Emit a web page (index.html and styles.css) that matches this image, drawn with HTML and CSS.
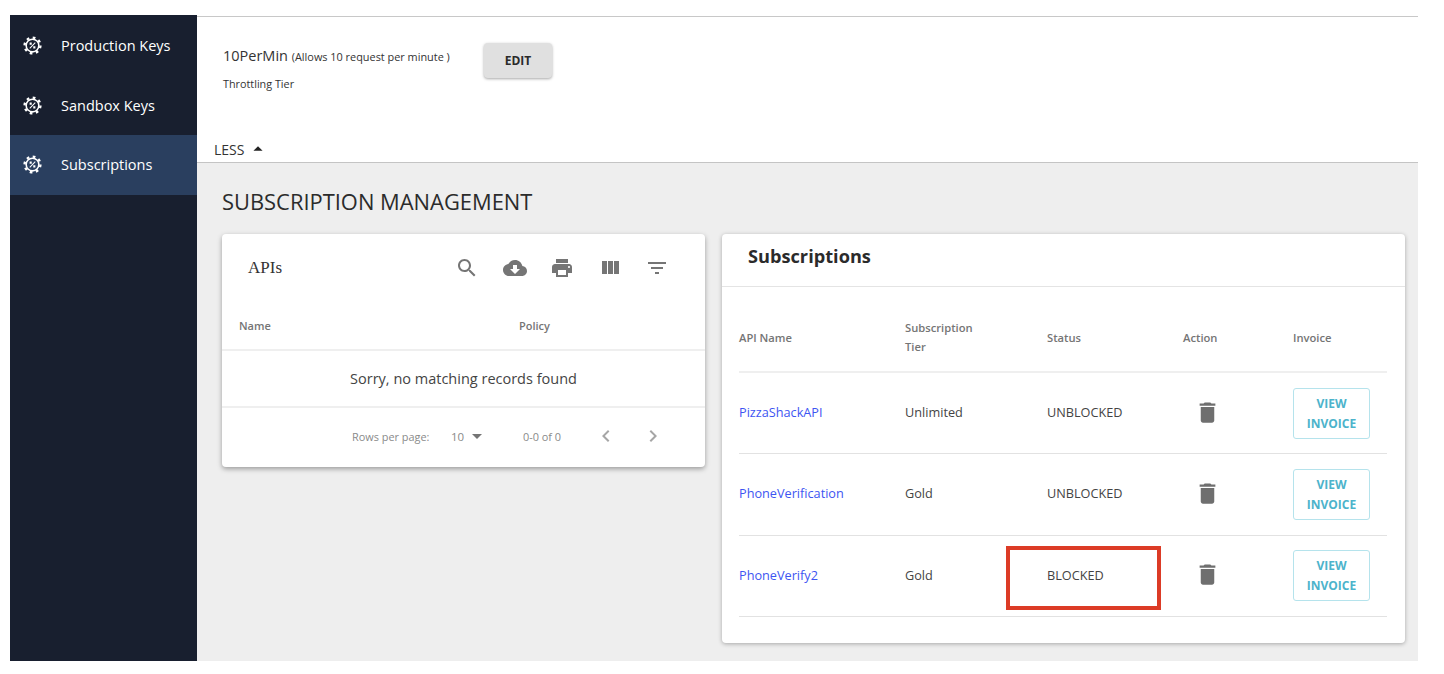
FILE: index.html
```html
<!DOCTYPE html>
<html lang="en">
<head>
    <meta charset="UTF-8">
    <meta name="viewport" content="width=device-width, initial-scale=1.0">
    <title>Subscriptions</title>
    <link rel="stylesheet" href="styles.css">
</head>
<body>
    <svg class="icon-defs" aria-hidden="true">
        <symbol id="gear" viewBox="0 0 24 24">
            <circle cx="12" cy="12" r="8" fill="none" stroke="currentColor" stroke-width="2"/>
            <circle cx="12" cy="12" r="10" fill="none" stroke="currentColor" stroke-width="3" stroke-dasharray="3.4 4.45"/>
            <path d="M8.5 15.5l7-7M9 9h1.4v1.4H9zM13.6 13.6H15V15h-1.4z" fill="none" stroke="currentColor" stroke-width="1.3"/>
        </symbol>
        <symbol id="trash" viewBox="0 0 24 24">
            <path d="M6 19c0 1.1.9 2 2 2h8c1.1 0 2-.9 2-2V7H6v12zM19 4h-3.5l-1-1h-5l-1 1H5v2h14V4z"/>
        </symbol>
    </svg>

    <div class="app">
        <nav class="sidebar">
            <a class="nav-item"><svg class="nav-icon"><use href="#gear"/></svg>Production Keys</a>
            <a class="nav-item"><svg class="nav-icon"><use href="#gear"/></svg>Sandbox Keys</a>
            <a class="nav-item active"><svg class="nav-icon"><use href="#gear"/></svg>Subscriptions</a>
        </nav>

        <main class="main">
            <section class="tier-panel">
                <div class="tier-row">
                    <div class="tier-info">
                        <p class="tier-name">10PerMin <small>(Allows 10 request per minute )</small></p>
                        <p class="tier-label">Throttling Tier</p>
                    </div>
                    <button class="edit-btn">EDIT</button>
                </div>
                <div class="less">LESS <svg viewBox="0 0 24 24"><path d="M7 14l5-5 5 5z"/></svg></div>
            </section>

            <section class="manage">
                <h1>SUBSCRIPTION MANAGEMENT</h1>
                <div class="cards">
                    <div class="card apis-card">
                        <div class="apis-toolbar">
                            <span class="apis-title">APIs</span>
                            <div class="toolbar-icons">
                                <svg viewBox="0 0 24 24"><path d="M15.5 14h-.79l-.28-.27C15.41 12.59 16 11.11 16 9.5 16 5.91 13.09 3 9.5 3S3 5.91 3 9.5 5.91 16 9.5 16c1.61 0 3.09-.59 4.23-1.57l.27.28v.79l5 4.99L20.49 19l-4.99-5zm-6 0C7.01 14 5 11.99 5 9.5S7.01 5 9.5 5 14 7.01 14 9.5 11.99 14 9.5 14z"/></svg>
                                <svg viewBox="0 0 24 24"><path d="M19.35 10.04C18.67 6.59 15.64 4 12 4 9.11 4 6.6 5.64 5.35 8.04 2.34 8.36 0 10.91 0 14c0 3.31 2.69 6 6 6h13c2.76 0 5-2.24 5-5 0-2.64-2.05-4.78-4.65-4.96zM17 13l-5 5-5-5h3V9h4v4h3z"/></svg>
                                <svg viewBox="0 0 24 24"><path d="M19 8H5c-1.66 0-3 1.34-3 3v6h4v4h12v-4h4v-6c0-1.66-1.34-3-3-3zm-3 11H8v-5h8v5zm3-7c-.55 0-1-.45-1-1s.45-1 1-1 1 .45 1 1-.45 1-1 1zm-1-9H6v4h12V3z"/></svg>
                                <svg viewBox="0 0 24 24"><path d="M10 18h5V5h-5v13zm-6 0h5V5H4v13zM16 5v13h5V5h-5z"/></svg>
                                <svg viewBox="0 0 24 24"><path d="M10 18h4v-2h-4v2zM3 6v2h18V6H3zm3 7h12v-2H6v2z"/></svg>
                            </div>
                        </div>
                        <div class="apis-head">
                            <span>Name</span>
                            <span>Policy</span>
                        </div>
                        <div class="apis-empty">Sorry, no matching records found</div>
                        <div class="apis-footer">
                            <span class="rows-label">Rows per page:</span>
                            <span class="rows-value">10 <svg viewBox="0 0 24 24"><path d="M7 10l5 5 5-5z"/></svg></span>
                            <span class="rows-range">0-0 of 0</span>
                            <svg class="pager" viewBox="0 0 24 24"><path d="M15.41 7.41L14 6l-6 6 6 6 1.41-1.41L10.83 12z"/></svg>
                            <svg class="pager" viewBox="0 0 24 24"><path d="M10 6L8.59 7.41 13.17 12l-4.58 4.58L10 18l6-6z"/></svg>
                        </div>
                    </div>

                    <div class="card subs-card">
                        <h2>Subscriptions</h2>
                        <div class="subs-table">
                            <div class="subs-row subs-head">
                                <span>API Name</span>
                                <span>Subscription<br>Tier</span>
                                <span>Status</span>
                                <span>Action</span>
                                <span>Invoice</span>
                            </div>
                            <div class="subs-row">
                                <a class="api-link">PizzaShackAPI</a>
                                <span>Unlimited</span>
                                <span>UNBLOCKED</span>
                                <svg class="trash"><use href="#trash"/></svg>
                                <button class="invoice-btn">VIEW INVOICE</button>
                            </div>
                            <div class="subs-row">
                                <a class="api-link">PhoneVerification</a>
                                <span>Gold</span>
                                <span>UNBLOCKED</span>
                                <svg class="trash"><use href="#trash"/></svg>
                                <button class="invoice-btn">VIEW INVOICE</button>
                            </div>
                            <div class="subs-row">
                                <a class="api-link">PhoneVerify2</a>
                                <span>Gold</span>
                                <span class="status-cell">BLOCKED<i class="highlight"></i></span>
                                <svg class="trash"><use href="#trash"/></svg>
                                <button class="invoice-btn">VIEW INVOICE</button>
                            </div>
                        </div>
                    </div>
                </div>
            </section>
        </main>
    </div>
</body>
</html>
```

FILE: styles.css
```css
body {
    font-family: "Open Sans", sans-serif;
    background-color: #fff;
    color: #333;
    margin: 0;
    padding: 15px 26px 0 10px;
    overflow: hidden;
}

.icon-defs {
    display: none;
}

.app {
    display: flex;
    height: 646px;
}

/* sidebar */
.sidebar {
    width: 187px;
    flex-shrink: 0;
    padding-top: 1px;
    background-color: #181f2f;
    color: #fff;
}

.nav-item {
    display: flex;
    align-items: center;
    height: 59.5px;
    padding-left: 13px;
    font-size: 14.5px;
}

.nav-item.active {
    background-color: #2a3f5f;
}

.nav-icon {
    width: 19px;
    height: 19px;
    margin-right: 19px;
    color: #fff;
}

/* throttling tier */
.main {
    flex: 1;
    display: flex;
    flex-direction: column;
}

.tier-panel {
    height: 147px;
    box-sizing: border-box;
    border-top: 1px solid #c8c8c8;
    border-bottom: 1px solid #c4c4c4;
    margin-top: 1px;
    padding: 25px 0 0 17px;
    position: relative;
}

.tier-row {
    display: flex;
    align-items: flex-start;
    padding-left: 9px;
}

.tier-info {
    width: 261px;
    padding-top: 4px;
}

.tier-name {
    margin: 0;
    font-size: 14.5px;
    line-height: 20px;
}

.tier-name small {
    font-size: 10.9px;
}

.tier-label {
    margin: 9px 0 0;
    font-size: 10.8px;
    line-height: 16px;
}

.edit-btn {
    width: 68px;
    height: 35px;
    margin-top: 1px;
    background-color: #e0e0e0;
    color: #2b2b2b;
    border: none;
    border-radius: 4px;
    box-shadow: 0 1px 3px rgba(0, 0, 0, 0.35);
    font-family: inherit;
    font-size: 12px;
    font-weight: 700;
}

.less {
    position: absolute;
    left: 17px;
    top: 123px;
    display: flex;
    align-items: center;
    gap: 3px;
    font-size: 14px;
    line-height: 20px;
}

.less svg {
    width: 22px;
    height: 22px;
    fill: #222;
    margin-top: -3px;
}

/* subscription management */
.manage {
    flex: 1;
    background-color: #eee;
    padding: 25px 13px 0 25px;
}

h1 {
    margin: 0 0 18px;
    font-size: 21.9px;
    font-weight: 400;
    line-height: 28px;
    color: #2b2b2b;
}

.cards {
    display: flex;
    align-items: flex-start;
    gap: 17px;
}

.card {
    background-color: #fff;
    border-radius: 4px;
    box-shadow: 0 1px 4px rgba(0, 0, 0, 0.3);
}

.apis-card {
    width: 483px;
    height: 233px;
    box-shadow: 0 2px 5px rgba(0, 0, 0, 0.35);
}

.apis-toolbar {
    display: flex;
    align-items: center;
    justify-content: space-between;
    height: 67px;
    padding: 0 36px 0 26px;
}

.apis-title {
    font-family: "Liberation Serif", serif;
    font-size: 17px;
    color: #333;
}

.toolbar-icons {
    display: flex;
    gap: 23.5px;
}

.toolbar-icons svg {
    width: 24px;
    height: 24px;
    fill: #757575;
}

.apis-head {
    display: grid;
    grid-template-columns: 280px 1fr;
    align-items: center;
    height: 50px;
    padding-left: 17px;
    border-bottom: 2px solid #efefef;
    box-sizing: border-box;
    font-size: 11px;
    font-weight: 600;
    color: #757575;
}

.apis-empty {
    height: 57px;
    box-sizing: border-box;
    border-bottom: 2px solid #efefef;
    display: flex;
    align-items: center;
    justify-content: center;
    font-size: 14.5px;
    color: #444;
}

.apis-footer {
    display: flex;
    align-items: center;
    height: 59px;
    box-sizing: border-box;
    padding: 0 0 3px 130px;
    font-size: 10.9px;
    color: #8a8a8a;
}

.rows-label {
    width: 99px;
}

.rows-value {
    width: 72px;
    display: flex;
    align-items: center;
    font-size: 11.5px;
    gap: 1px;
}

.rows-value svg {
    width: 24px;
    height: 24px;
    fill: #757575;
}

.rows-range {
    width: 71px;
}

.pager {
    width: 24px;
    height: 24px;
    fill: #a6a6a6;
    margin-right: 23px;
}

.subs-card {
    width: 683px;
    height: 409px;
    box-sizing: border-box;
    padding: 0 18px 0 17px;
}

h2 {
    margin: 0 -18px 0 -17px;
    height: 53px;
    box-sizing: border-box;
    padding: 8px 0 0 26px;
    border-bottom: 1px solid #e4e4e4;
    font-size: 18.2px;
    font-weight: 700;
    line-height: 28px;
    color: #2b2b2b;
}

.subs-table {
    padding-top: 23px;
}

.subs-row {
    display: grid;
    grid-template-columns: 166px 142px 136px 110px 1fr;
    align-items: center;
    height: 81.3px;
    box-sizing: border-box;
    padding-bottom: 2px;
    border-bottom: 1px solid #e2e2e2;
    font-size: 12.7px;
    color: #444;
}

.subs-row.subs-head {
    height: 63px;
    padding-bottom: 7px;
    border-bottom: 2px solid #efefef;
    font-size: 11.2px;
    font-weight: 600;
    line-height: 19px;
    color: #757575;
}

.api-link {
    color: #3d55f2;
}

.trash {
    width: 27px;
    height: 27px;
    margin-left: 11px;
    fill: #6f6f6f;
}

.invoice-btn {
    width: 77px;
    height: 51px;
    margin-top: 2px;
    padding: 1px 8px 0;
    background-color: #fff;
    border: 1px solid #b5e3ec;
    border-radius: 3px;
    font-family: inherit;
    font-size: 12px;
    font-weight: 700;
    line-height: 20px;
    color: #4cb3cb;
}

/* red annotation drawn over the screenshot */
.status-cell {
    position: relative;
}

.highlight {
    position: absolute;
    left: -41px;
    top: -20px;
    width: 147px;
    height: 56px;
    border: 4px solid #dc3b26;
}
```
